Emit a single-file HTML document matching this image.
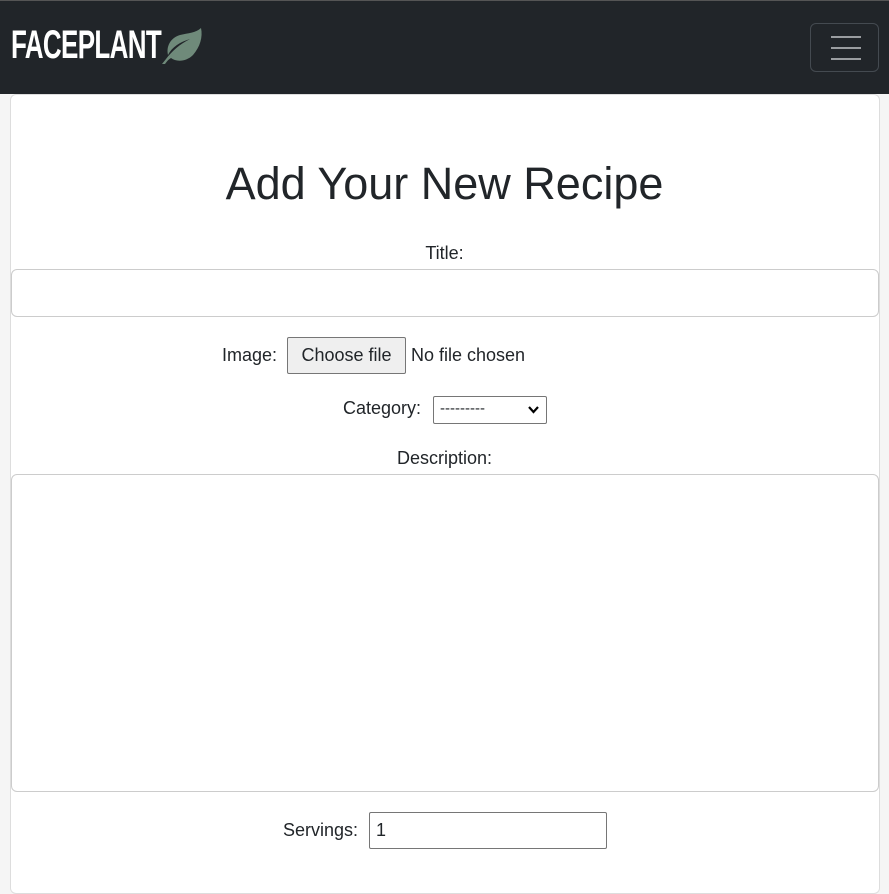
<!DOCTYPE html>
<html><head><style>
*{box-sizing:border-box}
body{margin:0;width:889px;height:873px;overflow:hidden;background:#f5f5f5;font-family:"Liberation Sans",Arial,sans-serif;color:#212529}
.nav{position:absolute;left:0;top:0;width:889px;height:94px;background:#212529;border-top:1px solid #555}
.logo{position:absolute;left:11px;top:22px;font-family:"Liberation Sans",sans-serif;font-weight:bold;font-size:40px;color:#fff;letter-spacing:-1px;transform:scaleX(0.65);transform-origin:left;white-space:nowrap}
.leaf{position:absolute;left:160px;top:26px}
.burger{position:absolute;left:810px;top:22px;width:69px;height:49px;border:1px solid #444a50;border-radius:6px}
.burger i{position:absolute;left:20px;width:30px;height:2px;background:#9a9da0}
.card{position:absolute;left:10px;top:94px;width:870px;height:800px;background:#fff;border:1px solid #ddd;border-radius:6px}
h1{position:absolute;top:158px;left:0;width:889px;margin:0;text-align:center;font-weight:normal;font-size:45px;color:#212529;letter-spacing:0px}
.lbl{position:absolute;font-size:18px;width:889px;left:0;text-align:center}
.inp{position:absolute;left:11px;width:868px;border:1px solid #ccc;border-radius:6px;background:#fff}
</style></head><body>
<div class="nav">
<div class="logo">FACEPLANT</div>
<svg class="leaf" width="44" height="38" viewBox="0 0 44 38"><path d="M41 1 C36 6 28 6 20 8 C10 11 6 20 8 28 C12 20 20 15 30 12 C20 17 12 24 6 32 L2 37 L5 37 C7 34 9 32 11 31 C16 35 26 35 33 28 C40 20 43 10 41 1 Z" fill="#6f8a7a"/></svg>
<div class="burger"><i style="top:12px"></i><i style="top:23px"></i><i style="top:34px"></i></div>
</div>
<div class="card"></div>
<h1>Add Your New Recipe</h1>
<div class="lbl" style="top:243px">Title:</div>
<div class="inp" style="top:269px;height:48px"></div>
<div style="position:absolute;top:345px;left:222px;font-size:18px">Image:</div>
<div style="position:absolute;left:287px;top:337px;width:119px;height:37px;background:#efefef;border:1px solid #767676;border-radius:2px;font-size:18px;text-align:center;line-height:35px">Choose file</div>
<div style="position:absolute;top:345px;left:411px;font-size:18px">No file chosen</div>
<div style="position:absolute;top:398px;left:343px;font-size:18px">Category:</div>
<div style="position:absolute;left:433px;top:396px;width:114px;height:28px;border:1px solid #767676;border-radius:2px;font-size:15px;padding:3px 6px">---------<svg style="position:absolute;right:7px;top:9px" width="11" height="8" viewBox="0 0 11 8"><path d="M1 1 L5.5 6 L10 1" stroke="#000" stroke-width="2.2" fill="none"/></svg></div>
<div class="lbl" style="top:448px">Description:</div>
<div class="inp" style="top:474px;height:318px"></div>
<div style="position:absolute;top:820px;left:283px;font-size:18px">Servings:</div>
<div style="position:absolute;left:369px;top:812px;width:238px;height:37px;border:1px solid #767676;border-radius:2px;font-size:18px;padding:7px 6px">1</div>
</body></html>
